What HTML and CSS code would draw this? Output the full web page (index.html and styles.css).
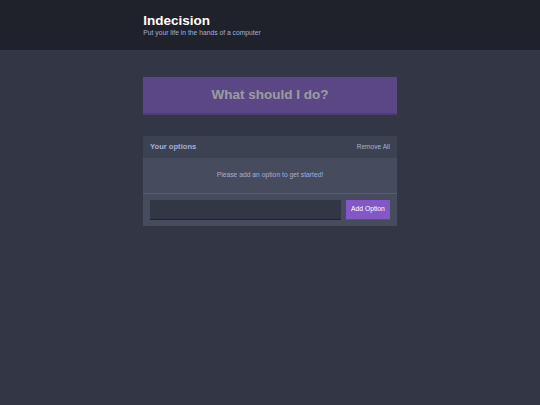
FILE: index.html
```html
<!DOCTYPE html>
<html lang="en">
<head>
<meta charset="utf-8">
<title>Indecision</title>
<link rel="stylesheet" href="styles.css">
</head>
<body>
  <header class="header">
    <div class="container">
      <h1 class="header__title">Indecision</h1>
      <h2 class="header__subtitle">Put your life in the hands of a computer</h2>
    </div>
  </header>
  <main class="container">
    <button class="big-button" disabled>What should I do?</button>
    <section class="widget">
      <div class="widget-header">
        <h3 class="widget-header__title">Your options</h3>
        <button class="button button--link">Remove All</button>
      </div>
      <p class="widget__message">Please add an option to get started!</p>
      <form class="add-option">
        <input class="add-option__input" type="text" name="option">
        <button class="button" type="button">Add Option</button>
      </form>
    </section>
  </main>
</body>
</html>
```

FILE: styles.css
```css
* {
  box-sizing: border-box;
}

html, body {
  margin: 0;
  padding: 0;
}

body {
  background: #333745;
  color: #a5afd7;
  font-family: "Liberation Sans", Arial, Helvetica, sans-serif;
  font-size: 6.75px;
  min-height: 405px;
}

button, input {
  font-family: inherit;
}

.container {
  width: 253.5px;
  margin: 0 auto;
}

.header {
  background: #20222b;
  padding: 13.3px 0 13.5px;
  margin-bottom: 27px;
}

.header__title {
  color: #ffffff;
  font-size: 13.5px;
  line-height: 15.5px;
  font-weight: bold;
  margin: 0;
}

.header__subtitle {
  color: #a5afd7;
  font-size: 6.75px;
  line-height: 8px;
  font-weight: 500;
  margin: 0;
}

.big-button {
  display: block;
  width: 100%;
  background: #8357c5;
  border: none;
  border-bottom: 2.5px solid #6a3fab;
  color: #ffffff;
  font-weight: bold;
  font-size: 13.5px;
  line-height: 15.5px;
  padding: 10px;
  margin: 0 0 21px;
  opacity: 0.5;
}

.widget {
  background: #464b5e;
}

.widget-header {
  background: #3c4251;
  display: flex;
  justify-content: space-between;
  align-items: center;
  padding: 6.75px;
}

.widget-header__title {
  margin: 0;
  font-size: 7.6px;
  line-height: 8.8px;
  font-weight: bold;
  color: #a5afd7;
}

.widget__message {
  margin: 0;
  padding: 13px 6.75px;
  line-height: 8.4px;
  text-align: center;
  color: #a5afd7;
  border-bottom: 1px solid #575d75;
}

.add-option {
  display: flex;
  margin: 0;
  padding: 6.2px 6.75px 6.3px;
}

.add-option__input {
  flex-grow: 1;
  background: #333745;
  border: none;
  border-bottom: 1.5px solid #1f222b;
  color: #a5afd7;
  font-size: 6.75px;
  line-height: 8px;
  height: 20px;
  padding: 5px;
  margin-right: 5px;
  outline: none;
}

.button {
  background: #8357c5;
  border: none;
  border-bottom: 1.5px solid #6a3fab;
  color: #ffffff;
  font-size: 6.75px;
  font-weight: 500;
  padding: 5px 5.2px;
  line-height: 8px;
}

.button--link {
  background: none;
  border: none;
  color: #a5afd7;
  padding: 0;
  font-size: 6.6px;
}
```
